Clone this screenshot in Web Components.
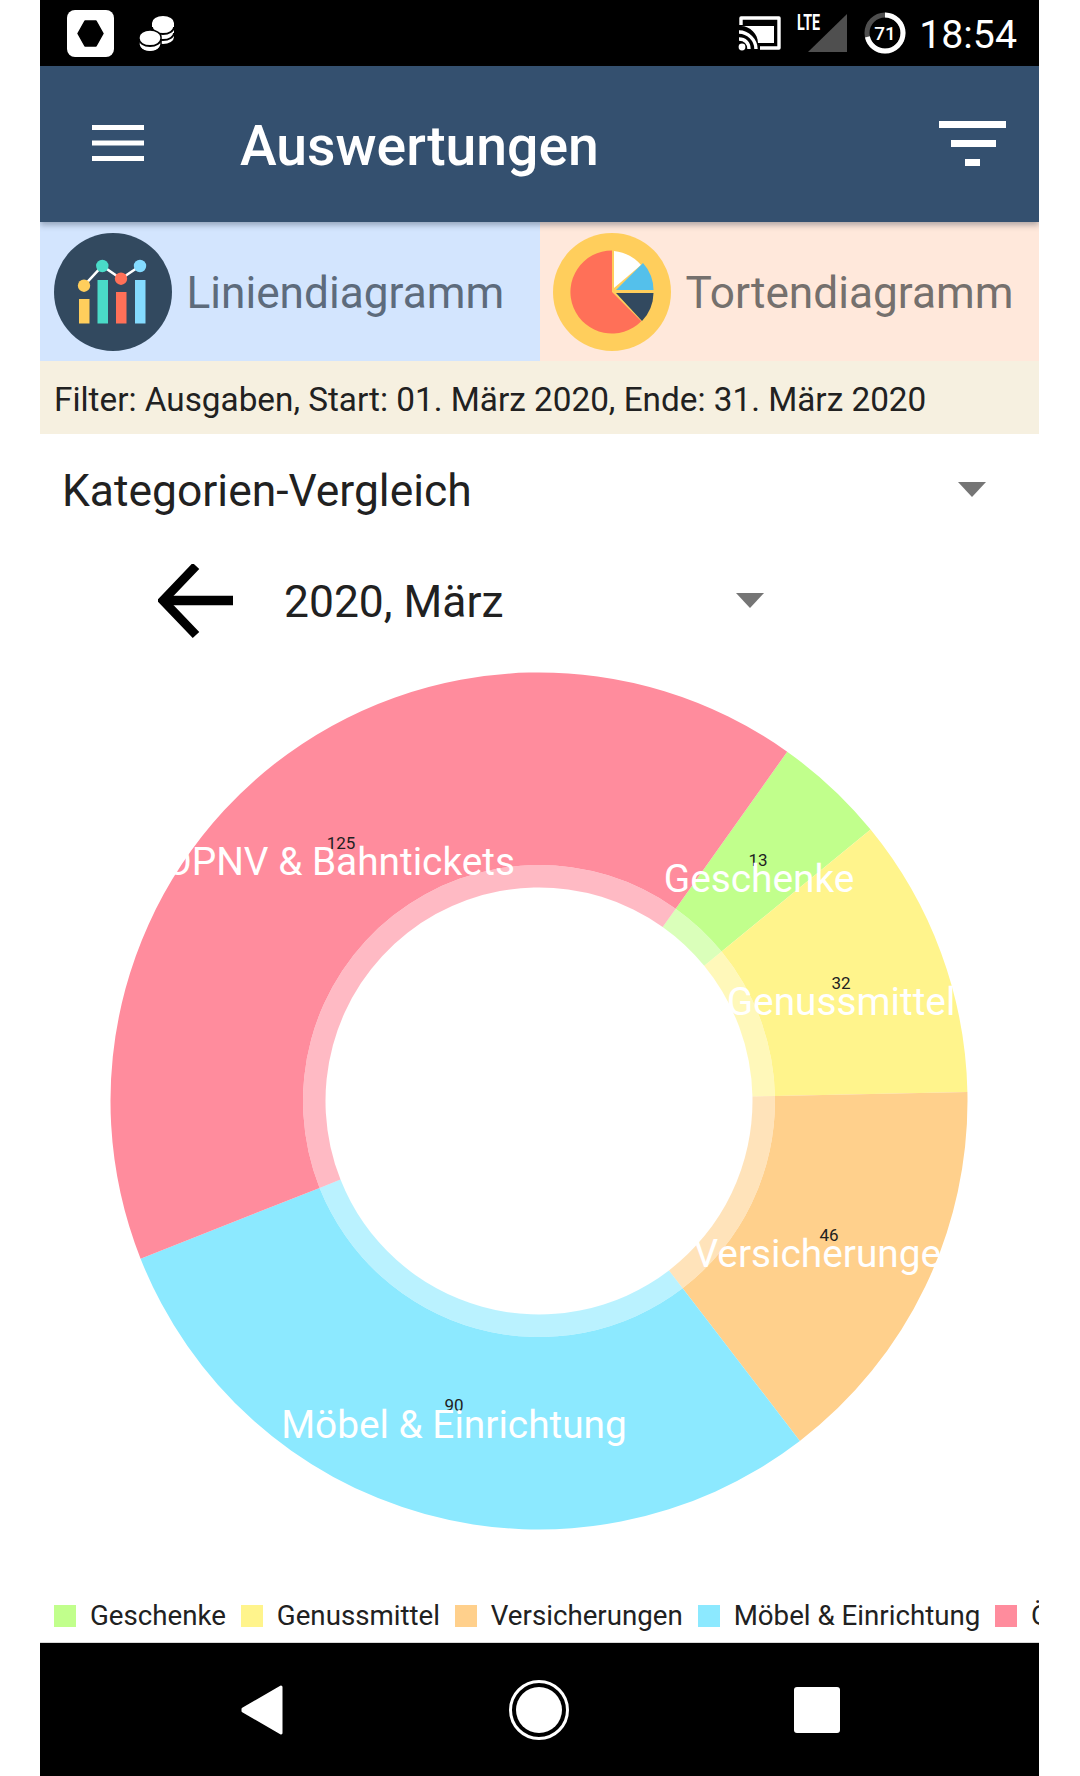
<!DOCTYPE html>
<html>
<head>
<meta charset="utf-8">
<style>
  html, body { margin: 0; padding: 0; background: #fff; }
  body { width: 1080px; height: 1776px; overflow: hidden; font-family: Roboto, sans-serif; }
  phone-screen { width: 999px; height: 1776px; margin-left: 40px; }
</style>
</head>
<body>
<phone-screen>
  <status-bar></status-bar>
  <app-bar>Auswertungen</app-bar>
  <div style="display:flex;height:139px">
    <chart-tab kind="line" bg="#d3e5fe" color="#5d6b7c" style="flex:none;width:500px">Liniendiagramm</chart-tab>
    <chart-tab kind="pie" bg="#ffe8db" color="#75706d" style="padding-left:13px">Tortendiagramm</chart-tab>
  </div>
  <filter-line>Filter: Ausgaben, Start: 01. März 2020, Ende: 31. März 2020</filter-line>
  <drop-down style="flex:none;height:112px;padding:2px 53px 0 22px">Kategorien-Vergleich</drop-down>
  <period-row>2020, März</period-row>
  <donut-chart></donut-chart>
  <chart-legend></chart-legend>
  <nav-bar></nav-bar>
</phone-screen>

<script>
(function() {
  function define(name, html, init) {
    customElements.define(name, class extends HTMLElement {
      constructor() {
        super();
        this.attachShadow({ mode: 'open' });
        this.shadowRoot.innerHTML = html;
      }
      connectedCallback() {
        if (init) init.call(this, this.shadowRoot);
      }
    });
  }

  define('phone-screen', `
  <style>
  :host { display: flex; flex-direction: column; position: relative; overflow: hidden; background: #fff; color: #212121; }
  </style>
  <slot></slot>`);

  define('status-bar', `
  <style>
  :host { display: flex; align-items: center; height: 66px; flex: none; background: #000; color: #fff; padding: 0 22px 0 27px; box-sizing: border-box; }
  svg { display: block; flex: none; }
  .spacer { flex: 1; }
  .time { font-size: 39.300px; line-height: 66px; margin-left: 13px; padding-top: 3px; }
  </style>
  <svg width="47" height="47" viewBox="0 0 47 47">
    <rect width="47" height="47" rx="8" fill="#fff"/>
    <path d="M18 11h11l7 12.500-7 12.500H18l-7-12.500z" fill="#000" stroke="#000" stroke-width="1.500" stroke-linejoin="round"/>
  </svg>
  <svg width="36" height="37" viewBox="0 0 36 37" style="margin-left:25px">
    <path d="M13 8a11 7 0 0 1 22 0v14a11 7 0 0 1-22 0z" fill="#fff"/>
    <path d="M13 12a11 7 0 0 0 22 0M13 18a11 7 0 0 0 22 0" fill="none" stroke="#000" stroke-width="1.800"/>
    <path d="M0 22a11 7 0 0 1 22 0v8a11 7 0 0 1-22 0z" fill="#fff" stroke="#000" stroke-width="1.500"/>
    <path d="M0 24a11 7 0 0 0 22 0M0 30a11 7 0 0 0 22 0" fill="none" stroke="#000" stroke-width="1.800"/>
  </svg>
  <div class="spacer"></div>
  <svg width="44" height="36" viewBox="0 0 44 36">
    <path d="M3 10V3h38v30H22" fill="none" stroke="#fff" stroke-width="3.400" stroke-linejoin="round"/>
    <path d="M3 11h33v17H20C20 19 12 11 3 11z" fill="#fff"/>
    <path d="M1 17c9 0 17 8 17 17M1 24c6 0 10 4 10 10" fill="none" stroke="#fff" stroke-width="3.400"/>
    <circle cx="4" cy="32" r="3.400" fill="#fff"/>
  </svg>
  <svg width="52" height="40" viewBox="0 0 52 40" style="margin-left:14px">
    <path d="M51 1V39H12z" fill="#4f4f4f"/>
    <text transform="translate(1 17) scale(.84 1.250)" font-family="Roboto" font-weight="700" font-size="17" fill="#fff">LTE</text>
  </svg>
  <svg width="42" height="42" viewBox="0 0 42 42" style="margin-left:16px">
    <circle cx="21" cy="21" r="18" fill="none" stroke="#4f4f4f" stroke-width="5"/>
    <circle cx="21" cy="21" r="18" fill="none" stroke="#fff" stroke-width="5" stroke-dasharray="80.300 113.100" transform="rotate(-90 21 21)"/>
    <text x="21" y="28" text-anchor="middle" font-family="Roboto" font-weight="500" font-size="19" fill="#fff">71</text>
  </svg>
  <div class="time">18:54</div>`);

  define('app-bar', `
  <style>
  :host { display: flex; align-items: center; height: 156px; flex: none; background: #34506f; color: #fff; position: relative; z-index: 2; box-shadow: 0 3px 6px rgba(30,40,60,.35); box-sizing: border-box; padding: 0 33px 0 52px; }
  svg { display: block; flex: none; }
  .title { flex: 1; font-size: 55.300px; font-weight: 500; margin-left: 96px; margin-top: 4px; }
  </style>
  <svg width="52" height="36" viewBox="0 0 52 36" style="margin-top:-2px">
    <path d="M0 0h52v5H0zM0 15.500h52v5H0zM0 31h52v5H0z" fill="#fff"/>
  </svg>
  <div class="title"><slot></slot></div>
  <svg width="67" height="45" viewBox="0 0 67 45" style="margin-top:-2px">
    <path d="M0 0h67v7H0zM12 19h45v7H12zM26 38h15v7H26z" fill="#fff"/>
  </svg>`);

  const ICONS = {
    line: `<circle cx="59" cy="59" r="59" fill="#32495f"/>
      <path d="M30 52.700L48.300 33 67 45.700 86 33" fill="none" stroke="#fff" stroke-width="2.500"/>
      <rect x="25" y="66" width="10.500" height="24.500" fill="#ffce5c"/>
      <rect x="43.500" y="47" width="10.500" height="43.500" fill="#4adbc8"/>
      <rect x="62" y="59" width="10.500" height="31.500" fill="#ff7058"/>
      <rect x="81" y="47" width="10.500" height="43.500" fill="#84dbff"/>
      <circle cx="30" cy="52.700" r="6.200" fill="#ffce5c"/>
      <circle cx="48.300" cy="33" r="6.200" fill="#4adbc8"/>
      <circle cx="67" cy="45.700" r="6.200" fill="#ff7058"/>
      <circle cx="86" cy="33" r="6.200" fill="#84dbff"/>`,
    pie: `<circle cx="59" cy="59" r="59" fill="#ffce5c"/>
      <path d="M59 59V17.500A41.500 41.500 0 1 0 88.300 88.300z" fill="#ff7058"/>
      <path d="M61 55V18A41.500 41.500 0 0 1 88 32z" fill="#fff"/>
      <path d="M63 57L90 30A41.500 41.500 0 0 1 100.500 57z" fill="#54c0eb"/>
      <path d="M63 60H100.500A41.500 41.500 0 0 1 89 88z" fill="#32495f"/>`
  };

  customElements.define('chart-tab', class extends HTMLElement {
    constructor() {
      super();
      this.attachShadow({ mode: 'open' });
    }
    connectedCallback() {
      this.shadowRoot.innerHTML = `
      <style>
      :host { display: flex; align-items: center; flex: 1; box-sizing: border-box; padding: 0 0 0 14px; background: ${this.getAttribute('bg')}; color: ${this.getAttribute('color')}; }
      svg { display: block; flex: none; }
      .name { font-size: 44.200px; margin-left: 14.500px; margin-top: 2px; }
      </style>
      <svg width="118" height="118" viewBox="0 0 118 118">${ICONS[this.getAttribute('kind')]}</svg>
      <div class="name"><slot></slot></div>`;
    }
  });

  define('filter-line', `
  <style>
  :host { display: flex; align-items: center; height: 73px; flex: none; box-sizing: border-box; padding: 4px 0 0 14px; background: #f6f0e0; color: #212121; font-size: 33.300px; white-space: nowrap; }
  </style>
  <slot></slot>`);

  define('drop-down', `
  <style>
  :host { display: flex; align-items: center; flex: 1; box-sizing: border-box; font-size: 44.400px; color: #212121; }
  .text { flex: 1; }
  .arrow { width: 0; height: 0; border-left: 14.500px solid transparent; border-right: 14.500px solid transparent; border-top: 15px solid #757575; margin-top: -3px; }
  </style>
  <div class="text"><slot></slot></div>
  <div class="arrow"></div>`);

  define('period-row', `
  <style>
  :host { display: flex; align-items: center; height: 104px; flex: none; padding: 6px 0 0 118px; box-sizing: border-box; }
  svg { display: block; flex: none; }
  drop-down { height: 98px; margin-left: 51px; padding: 2px 275px 0 0; }
  </style>
  <svg width="75" height="75" viewBox="0 0 75 75">
    <path d="M75 36.500H8" fill="none" stroke="#000" stroke-width="9.500"/>
    <path d="M38 2L5 36.500 38 71" fill="none" stroke="#000" stroke-width="9"/>
  </svg>
  <drop-down><slot></slot></drop-down>`);

  // end = clockwise angle from north where the slice stops, read off the reference
  const SLICES = [
    { name: 'Geschenke', value: 13, color: '#c1ff8c', end: 50.7, tx: 719, ty: 892, vx: 718, vy: 866 },
    { name: 'Genussmittel', value: 32, color: '#fff48c', end: 88.8, tx: 801, ty: 1015, vx: 801, vy: 989 },
    { name: 'Versicherungen', value: 46, color: '#ffd08c', end: 142.5, tx: 788, ty: 1267, vx: 789, vy: 1241 },
    { name: 'Möbel & Einrichtung', value: 90, color: '#8ce9ff', end: 248.4, tx: 414, ty: 1438, vx: 414, vy: 1411 },
    { name: 'ÖPNV & Bahntickets', value: 125, color: '#ff8c9d', end: 395.4, tx: 300, ty: 875, vx: 301, vy: 849 }
  ];

  function sector(r0, r1, a0, a1, cx, cy) {
    const pt = (r, a) => {
      const t = a * Math.PI / 180;
      return (cx + r * Math.sin(t)).toFixed(2) + ' ' + (cy - r * Math.cos(t)).toFixed(2);
    };
    const big = a1 - a0 > 180 ? 1 : 0;
    return `M${pt(r1, a0)}A${r1} ${r1} 0 ${big} 1 ${pt(r1, a1)}L${pt(r0, a1)}A${r0} ${r0} 0 ${big} 0 ${pt(r0, a0)}Z`;
  }

  define('donut-chart', `
  <style>
  :host { display: block; flex: none; height: 944px; }
  svg { display: block; }
  text { font-family: Roboto, sans-serif; }
  .label { font-size: 38.800px; fill: #fff; text-anchor: middle; }
  .value { font-size: 17px; fill: #212121; text-anchor: middle; }
  </style>
  <svg width="999" height="944" viewBox="0 0 999 944"></svg>`, function(root) {
    const top = 650;                    // page y where this element starts
    const cx = 499, cy = 1101 - top;
    let a = 35.4;
    let paths = '', values = '', labels = '';
    SLICES.forEach(s => {
      const a1 = s.end;
      paths += `<path d="${sector(236, 428.500, a, a1, cx, cy)}" fill="${s.color}"/>`;
      paths += `<path d="${sector(213.500, 236, a, a1, cx, cy)}" fill="${s.color}" fill-opacity=".6"/>`;
      values += `<text class="value" x="${s.vx}" y="${s.vy - top}">${s.value}</text>`;
      labels += `<text class="label" x="${s.tx}" y="${s.ty - top}">${s.name}</text>`;
      a = a1;
    });
    root.querySelector('svg').innerHTML = paths + values + labels;
  });

  define('chart-legend', `
  <style>
  :host { display: flex; align-items: center; height: 48px; flex: none; padding: 0 0 5px 14px; font-size: 27.700px; color: #212121; white-space: nowrap; overflow: hidden; box-sizing: border-box; }
  .item { display: flex; align-items: center; flex: none; margin-right: 14.800px; }
  .box { width: 22px; height: 22px; margin-right: 14px; flex: none; }
  </style>`, function(root) {
    root.innerHTML += SLICES.map(s =>
      `<div class="item"><div class="box" style="background:${s.color}"></div><span>${s.name}</span></div>`
    ).join('');
  });

  define('nav-bar', `
  <style>
  :host { display: flex; align-items: center; height: 134px; flex: none; background: #000; border-top: 1px solid #d8d8d8; box-sizing: border-box; }
  svg { display: block; flex: none; }
  </style>
  <svg width="44" height="50" viewBox="0 0 44 50" style="margin-left:200px">
    <path d="M41 2L3 24v2l38 22z" fill="#fff" stroke="#fff" stroke-width="3" stroke-linejoin="round"/>
  </svg>
  <svg width="60" height="60" viewBox="0 0 60 60" style="margin-left:225px">
    <circle cx="30" cy="30" r="28.500" fill="none" stroke="#fff" stroke-width="3"/>
    <circle cx="30" cy="30" r="23" fill="#fff"/>
  </svg>
  <svg width="46" height="46" viewBox="0 0 46 46" style="margin-left:225px">
    <rect width="46" height="46" rx="3" fill="#fff"/>
  </svg>`);
})();
</script>
</body>
</html>
